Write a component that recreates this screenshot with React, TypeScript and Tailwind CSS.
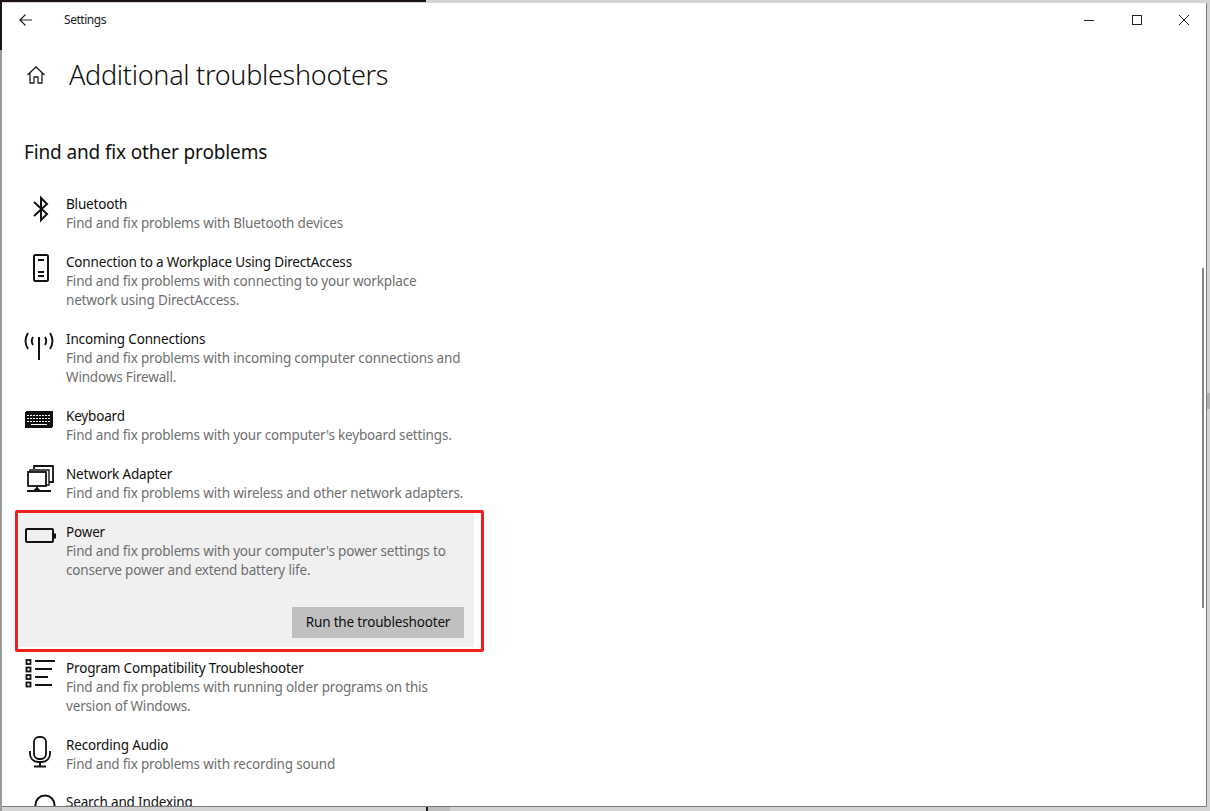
import { ReactNode } from "react";

interface Troubleshooter {
  name: string;
  lines: string[];
  icon: ReactNode;
}

const BluetoothIcon = (
  <svg width="20" height="28" viewBox="0 0 20 28" fill="none" stroke="#111" strokeWidth="2" className="ml-[7px]">
    <path d="M3 7 L16 19 L10 25 L10 3 L16 9 L3 21" />
  </svg>
);

const PhoneIcon = (
  <svg width="18" height="30" viewBox="0 0 18 30" fill="none" stroke="#111" strokeWidth="2" className="ml-[8px]">
    <rect x="2" y="2" width="14" height="26" rx="1.500" />
    <path d="M6 7h6M6 19h6M6 23h6" />
  </svg>
);

const AntennaIcon = (
  <svg width="32" height="30" viewBox="0 0 32 30" fill="none" stroke="#111" strokeWidth="1.900" className="-ml-[1px]">
    <path d="M16 7v23" strokeWidth="2" />
    <path d="M5 3Q0 11 5 19M27 3Q32 11 27 19M10 7Q7.500 11 10 15M22 7Q24.500 11 22 15" />
  </svg>
);

const KeyboardIcon = (
  <svg width="30" height="20" viewBox="0 0 30 20" shapeRendering="crispEdges" className="ml-[1px] mt-[4px]">
    <rect x="0" y="0" width="28" height="17" rx="2" fill="#111" />
    <path d="M2 4.500h24M2 7.500h24M2 10.500h24" stroke="#fff" strokeWidth="1" strokeDasharray="2 1" />
    <path d="M6 13.500h16" stroke="#fff" strokeWidth="1" />
  </svg>
);

const NetworkIcon = (
  <svg width="30" height="30" viewBox="0 0 30 30" fill="none" stroke="#111" strokeWidth="1.800" className="ml-[2px] -mt-[1px]">
    <path d="M8 5V2h19v16h-4" />
    <path d="M4 9V6h19v15h-4" strokeWidth="1.400" />
    <rect x="2" y="8" width="18" height="14" fill="#fff" />
    <path d="M11 22v3M8 27l3-3 3 3zM1 27h24" />
  </svg>
);

const BatteryIcon = (
  <svg width="32" height="18" viewBox="0 0 32 18" fill="none" className="ml-[1px] mt-[3px]">
    <rect x="1" y="2" width="27" height="13" rx="1" stroke="#111" strokeWidth="2" />
    <rect x="28" y="6.500" width="3" height="5" fill="#111" />
  </svg>
);

const ListIcon = (
  <svg width="32" height="30" viewBox="0 0 32 30" fill="none" stroke="#111" strokeWidth="1.800" className="ml-[1px]">
    <path d="M10 2h20M10 10h17M10 18h13M10 26h17" />
    <rect x="1.500" y="1" width="4" height="4" />
    <rect x="1.500" y="8.500" width="4" height="4" />
    <rect x="1.500" y="16" width="4" height="4" />
    <rect x="1.500" y="23.500" width="4" height="4" />
  </svg>
);

const MicIcon = (
  <svg width="24" height="32" viewBox="0 0 24 32" fill="none" stroke="#111" strokeWidth="1.800" className="ml-[4px]">
    <rect x="6" y="1" width="12" height="22" rx="5" />
    <path d="M2 15v3a8 8 0 0 0 8 8h4a8 8 0 0 0 8-8v-3M12 26v4M6 30.500h12" />
  </svg>
);

const SearchIcon = (
  <svg width="26" height="30" viewBox="0 0 26 30" fill="none" stroke="#111" strokeWidth="2" className="ml-[10px]">
    <circle cx="11" cy="12" r="9.500" />
  </svg>
);

const before: Troubleshooter[] = [
  { name: "Bluetooth", lines: ["Find and fix problems with Bluetooth devices"], icon: BluetoothIcon },
  {
    name: "Connection to a Workplace Using DirectAccess",
    lines: ["Find and fix problems with connecting to your workplace", "network using DirectAccess."],
    icon: PhoneIcon,
  },
  {
    name: "Incoming Connections",
    lines: ["Find and fix problems with incoming computer connections and", "Windows Firewall."],
    icon: AntennaIcon,
  },
  { name: "Keyboard", lines: ["Find and fix problems with your computer's keyboard settings."], icon: KeyboardIcon },
  { name: "Network Adapter", lines: ["Find and fix problems with wireless and other network adapters."], icon: NetworkIcon },
];

const after: Troubleshooter[] = [
  {
    name: "Program Compatibility Troubleshooter",
    lines: ["Find and fix problems with running older programs on this", "version of Windows."],
    icon: ListIcon,
  },
  { name: "Recording Audio", lines: ["Find and fix problems with recording sound"], icon: MicIcon },
];

const RowText = ({ item }: { item: Troubleshooter }) => (
  <div className="flex-1 min-w-0 whitespace-nowrap tracking-[-0.17px]">
    <p className="text-[13.500px] leading-[20px] text-[#111]">{item.name}</p>
    {item.lines.map((line) => (
      <p key={line} className="text-[13.500px] leading-[19px] text-[#6f6f6f]">
        {line}
      </p>
    ))}
  </div>
);

const Row = ({ item }: { item: Troubleshooter }) => (
  <div className="flex pb-[19px]">
    <div className="w-[42px] shrink-0 pt-[1px]">{item.icon}</div>
    <RowText item={item} />
  </div>
);

export default function App() {
  return (
    <div className="relative w-[1210px] h-[811px] overflow-hidden bg-[#d4d4d4] pl-[2px] pt-[3px] pr-[3px] pb-[4px] font-['Noto_Sans',sans-serif]">
      {/* bits of the desktop behind the window */}
      <div className="absolute left-0 top-0 w-[426px] h-[2px] bg-[#1c1412]" />
      <div className="absolute left-0 top-0 w-[2px] h-[50px] bg-[#1c1412]" />
      <div className="absolute left-0 top-[50px] w-[2px] h-[761px] bg-[#9a9a9a]" />
      <div className="absolute left-[426px] bottom-0 w-[2px] h-[4px] bg-[#1c1c1c]" />
      <div className="absolute left-[428px] bottom-0 w-[22px] h-[4px] bg-[#bdbdbd]" />
      <div className="absolute right-0 top-[393px] w-[3px] h-[16px] bg-[#b0b0b0]" />

      <div className="relative flex flex-col h-full bg-white border-r border-b border-[#7a7a7a] overflow-hidden">
        {/* Title bar */}
        <div className="flex items-center h-[34px] shrink-0">
          <svg width="16" height="14" viewBox="0 0 16 14" fill="none" stroke="#222" strokeWidth="1.200" className="ml-[16px]">
            <path d="M14 7H2M7.500 1.500 2 7l5.500 5.500" />
          </svg>
          <span className="ml-[30px] text-[12px] tracking-[-0.45px] text-[#222]">Settings</span>
          <div className="flex-1" />
          <svg width="12" height="12" viewBox="0 0 12 12" fill="none" stroke="#222" className="mr-[36px]">
            <path d="M1 6.500h10" />
          </svg>
          <svg width="12" height="12" viewBox="0 0 12 12" fill="none" stroke="#222" className="mr-[35px]">
            <rect x="1.500" y="1.500" width="9" height="9" />
          </svg>
          <svg width="12" height="12" viewBox="0 0 12 12" fill="none" stroke="#222" className="mr-[16px]">
            <path d="M1 1l10 10M11 1 1 11" />
          </svg>
        </div>

        {/* Page heading */}
        <div className="flex items-center h-[46px] mt-[15px] shrink-0">
          <svg width="20" height="20" viewBox="0 0 20 20" fill="none" stroke="#222" strokeWidth="1.300" className="ml-[24px]">
            <path d="M1.500 10 10 2l8.500 8M4 8v10h4v-6h4v6h4V8" />
          </svg>
          <h1 className="ml-[23px] text-[27px] font-light tracking-[-0.3px] text-[#111]">Additional troubleshooters</h1>
        </div>

        <h2 className="ml-[22px] mt-[40px] text-[19px] leading-[28px] tracking-[-0.14px] text-[#111]">Find and fix other problems</h2>

        {/* Troubleshooter list */}
        <div className="relative flex-1 min-h-0 overflow-hidden pl-[22px] pt-[28px]">
          <div className="w-[450px]">
            {before.map((item) => (
              <Row key={item.name} item={item} />
            ))}

            <div className="relative -ml-[5px] -mt-[9px] mb-[11px] pl-[5px] pr-[5px] pt-[9px] pb-[9px] bg-[#f0f0f0] h-[134px]">
              <div className="flex">
                <div className="w-[42px] shrink-0 pt-[2px]">{BatteryIcon}</div>
                <RowText item={{ name: "Power", lines: ["Find and fix problems with your computer's power settings to", "conserve power and extend battery life."], icon: null }} />
              </div>
              <div className="flex justify-end mt-[27px] pr-[5px]">
                <button className="w-[172px] h-[31px] bg-[#c0c0c0] text-[13.500px] tracking-[-0.17px] text-[#111]">Run the troubleshooter</button>
              </div>
              {/* red annotation box */}
              <div className="absolute -left-[4px] -right-[10px] -top-[3px] -bottom-[5px] border-[3px] border-[#f0201a] rounded-[2px]" />
            </div>

            {after.map((item) => (
              <Row key={item.name} item={item} />
            ))}
            <div className="flex -mt-[1px]">
              <div className="w-[42px] shrink-0 pt-[1px]">{SearchIcon}</div>
              <RowText item={{ name: "Search and Indexing", lines: [], icon: null }} />
            </div>
          </div>
        </div>

        {/* Scrollbar thumb */}
        <div className="absolute right-[2px] top-[265px] w-[2px] h-[340px] bg-[#858585]" />
      </div>
    </div>
  );
}
